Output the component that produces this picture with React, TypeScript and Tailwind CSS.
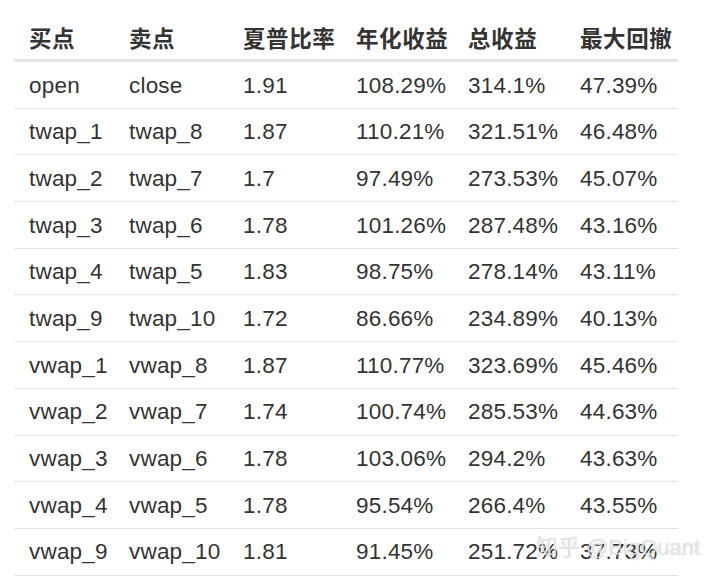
const headers = ["买点", "卖点", "夏普比率", "年化收益", "总收益", "最大回撤"];

const rows = [
  ["open", "close", "1.91", "108.29%", "314.1%", "47.39%"],
  ["twap_1", "twap_8", "1.87", "110.21%", "321.51%", "46.48%"],
  ["twap_2", "twap_7", "1.7", "97.49%", "273.53%", "45.07%"],
  ["twap_3", "twap_6", "1.78", "101.26%", "287.48%", "43.16%"],
  ["twap_4", "twap_5", "1.83", "98.75%", "278.14%", "43.11%"],
  ["twap_9", "twap_10", "1.72", "86.66%", "234.89%", "40.13%"],
  ["vwap_1", "vwap_8", "1.87", "110.77%", "323.69%", "45.46%"],
  ["vwap_2", "vwap_7", "1.74", "100.74%", "285.53%", "44.63%"],
  ["vwap_3", "vwap_6", "1.78", "103.06%", "294.2%", "43.63%"],
  ["vwap_4", "vwap_5", "1.78", "95.54%", "266.4%", "43.55%"],
  ["vwap_9", "vwap_10", "1.81", "91.45%", "251.72%", "37.73%"],
];

const grid = "grid grid-cols-[100px_114px_113px_112px_112px_113px]";

export default function App() {
  return (
    <div className="relative w-[720px] h-[583px] overflow-hidden bg-white font-['Liberation_Sans','Noto_Sans_CJK_SC',sans-serif] text-[#333333]">
      <div className="ml-[14px] w-[664px]">
        <div className={`${grid} h-[62px] border-b-[3px] border-[#e6e6e6] pt-[16px] items-center`}>
          {headers.map((h) => (
            <div key={h} className="pl-[15px] text-[22.5px] font-bold font-['Noto_Sans_CJK_SC',sans-serif] tracking-[0.6px] text-[#333333]">
              {h}
            </div>
          ))}
        </div>
        {rows.map((r, i) => (
          <div key={i} className={`${grid} h-[46.7px] border-b border-[#e4e4e4] items-center pt-[2px]`}>
            {r.map((c, j) => (
              <div key={j} className="pl-[15px] text-[22.5px] leading-none tracking-[0.2px]">
                {c}
              </div>
            ))}
          </div>
        ))}
      </div>
      <div className="absolute left-[536px] top-[537px] text-[22px] leading-none text-white/70 [text-shadow:0_0_1px_rgba(120,120,120,0.6)] font-['Liberation_Sans','Noto_Sans_CJK_SC',sans-serif]">
        知乎 @BigQuant
      </div>
    </div>
  );
}
